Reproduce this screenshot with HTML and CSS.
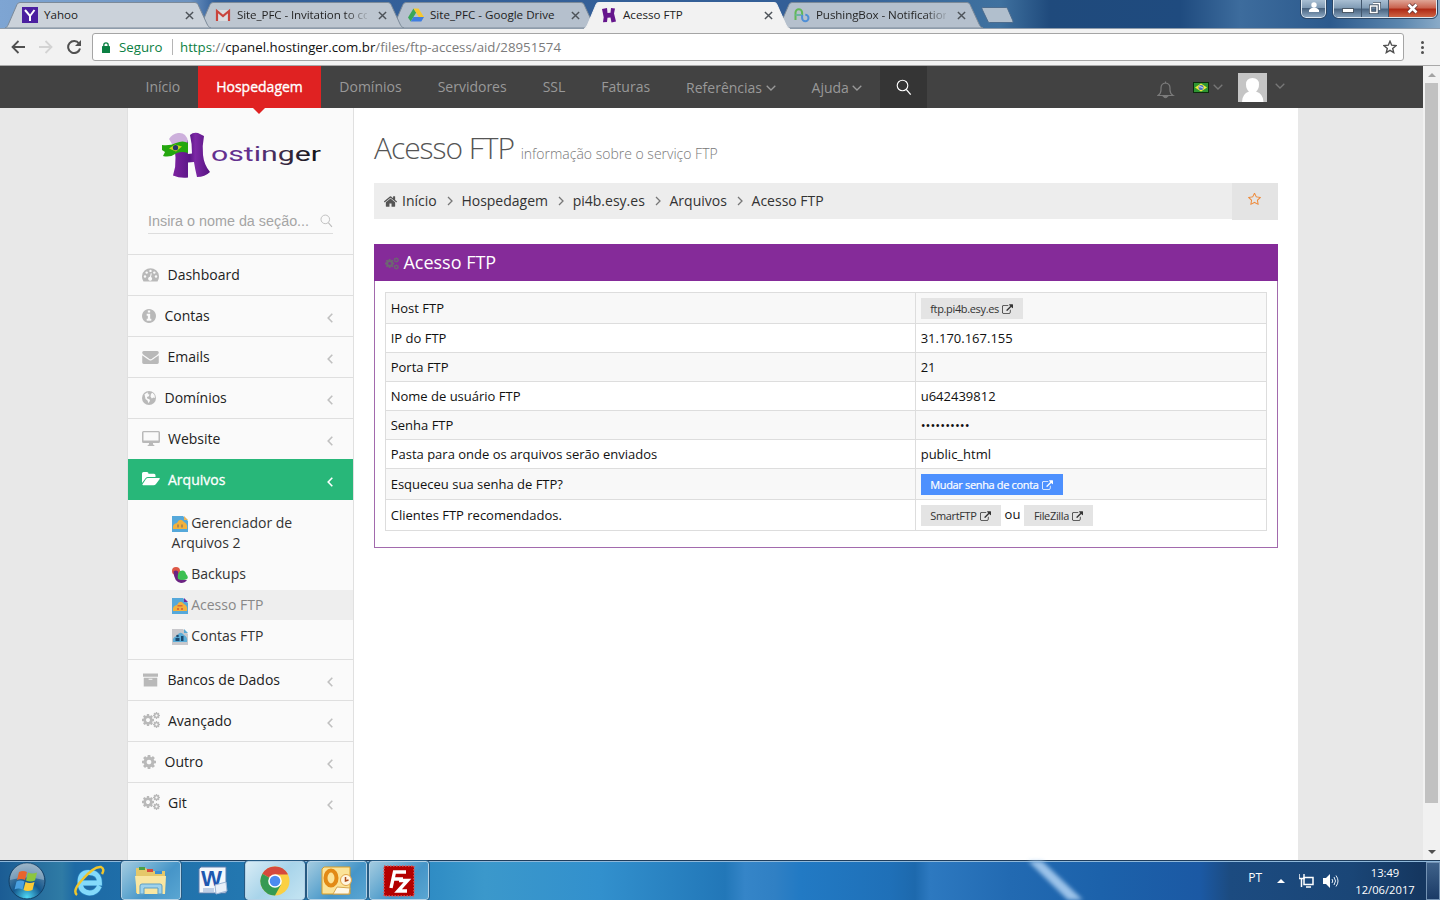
FILE: index.html
```html
<!DOCTYPE html>
<html lang="pt-BR">
<head>
<meta charset="utf-8">
<title>Acesso FTP</title>
<link rel="stylesheet" href="styles.css">
</head>
<body>
<svg class="defs" width="0" height="0" aria-hidden="true">
  <symbol id="tab" viewBox="0 0 206 28" preserveAspectRatio="none"><path d="M0 28 C2 27.500 2.500 26 3.500 24 L12 4.500 Q13 2.500 15 2.500 H190 Q192 2.500 193 4.500 L202 24 C203 26 204 27.500 206 28Z"/></symbol>
  <symbol id="close" viewBox="0 0 10 10"><path d="M1 1l8 8M9 1l-8 8" fill="none" stroke="#4d5359" stroke-width="1.600"/></symbol>
  <symbol id="down" viewBox="0 0 10 6"><path d="M.7.7L5 5 9.300.7" fill="none" stroke="currentColor" stroke-width="1.300"/></symbol>
  <symbol id="left" viewBox="0 0 6 10"><path d="M5.300.8L1.200 5l4.100 4.200" fill="none" stroke="currentColor" stroke-width="1.600"/></symbol>
  <symbol id="right" viewBox="0 0 6 10"><path d="M1 1l4 4-4 4" fill="none" stroke="currentColor" stroke-width="1.300"/></symbol>
  <symbol id="search" viewBox="0 0 16 17"><circle cx="6.500" cy="6.500" r="5.300" fill="none" stroke="currentColor" stroke-width="1.100"/><path d="M10.200 10.400l4.500 5.300" fill="none" stroke="currentColor" stroke-width="1.300"/></symbol>
  <symbol id="cog" viewBox="128 128 1536 1536"><path d="M1152 896q0-106-75-181t-181-75-181 75-75 181 75 181 181 75 181-75 75-181zm512-109v222q0 12-8 23t-20 13l-185 28q-19 54-39 91 35 50 107 138 10 12 10 25t-9 23q-27 37-99 108t-94 71q-12 0-26-9l-138-108q-44 23-91 38-16 136-29 186-7 28-36 28h-222q-14 0-24.500-8.500t-11.500-21.500l-28-184q-49-16-90-37l-141 107q-10 9-25 9-14 0-25-11-126-114-165-168-7-10-7-23 0-12 8-23 15-21 51-66.500t54-70.500q-27-50-41-99l-183-27q-13-2-21-12.500t-8-23.500v-222q0-12 8-23t19-13l186-28q14-46 39-92-40-57-107-138-10-12-10-24 0-10 9-23 26-36 98.500-107.500t94.500-71.500q13 0 26 10l138 107q44-23 91-38 16-136 29-186 7-28 36-28h222q14 0 24.500 8.500t11.500 21.500l28 184q49 16 90 37l142-107q9-9 24-9 13 0 25 10 129 119 165 170 7 8 7 22 0 12-8 23-15 21-51 66.500t-54 70.500q26 50 41 98l183 28q13 2 21 12.500t8 23.500z"/></symbol>
  <symbol id="cogs" viewBox="0 0 18 16"><use href="#cog" x="0" y="2" width="12" height="12"/><use href="#cog" x="11" y="0" width="7" height="7"/><use href="#cog" x="11" y="9" width="7" height="7"/></symbol>
  <symbol id="staro" viewBox="64 128 1664 1600"><path d="M1201 1004l306-297-422-62-189-382-189 382-422 62 306 297-73 421 378-199 377 199zm527-357q0 22-26 48l-363 354 86 500q1 7 1 20 0 50-41 50-19 0-40-12l-449-236-449 236q-22 12-40 12-21 0-31.500-14.500t-10.500-35.500q0-6 2-20l86-500-364-354q-25-27-25-48 0-37 56-46l502-73 225-455q19-41 49-41t49 41l225 455 502 73q56 9 56 46z"/></symbol>
  <symbol id="home" viewBox="90 250 1612 1290"><path d="M1472 992v480q0 26-19 45t-45 19h-384v-384h-256v384h-384q-26 0-45-19t-19-45v-480q0-1 .5-3t.5-3l575-474 575 474q1 2 1 6zm223-69l-62 74q-8 9-21 11h-3q-13 0-21-7l-692-577-692 577q-12 8-24 7-13-2-21-11l-62-74q-8-10-7-23.500t11-21.500l719-599q32-26 76-26t76 26l244 204v-195q0-14 9-23t23-9h192q14 0 23 9t9 23v408l219 182q10 8 11 21.500t-7 23.500z"/></symbol>
  <symbol id="ext" viewBox="0 0 1792 1540"><path d="M1408 928v320q0 119-84.500 203.500t-203.500 84.500h-832q-119 0-203.500-84.500t-84.500-203.500v-832q0-119 84.500-203.500t203.500-84.500h704q14 0 23 9t9 23v64q0 14-9 23t-23 9h-704q-66 0-113 47t-47 113v832q0 66 47 113t113 47h832q66 0 113-47t47-113v-320q0-14 9-23t23-9h64q14 0 23 9t9 23zm384-864v512q0 26-19 45t-45 19-45-19l-176-176-652 652q-10 10-23 10t-23-10l-114-114q-10-10-10-23t10-23l652-652-176-176q-19-19-19-45t19-45 45-19h512q26 0 45 19t19 45z"/></symbol>
  <symbol id="info" viewBox="128 128 1536 1536"><path d="M1152 1376v-160q0-14-9-23t-23-9h-96v-512q0-14-9-23t-23-9h-320q-14 0-23 9t-9 23v160q0 14 9 23t23 9h96v320h-96q-14 0-23 9t-9 23v160q0 14 9 23t23 9h448q14 0 23-9t9-23zm-128-896v-160q0-14-9-23t-23-9h-192q-14 0-23 9t-9 23v160q0 14 9 23t23 9h192q14 0 23-9t9-23zm640 416q0 209-103 385.500t-279.500 279.500-385.500 103-385.500-103-279.500-279.500-103-385.500 103-385.500 279.500-279.500 385.500-103 385.500 103 279.500 279.500 103 385.500z"/></symbol>
  <symbol id="mail" viewBox="0 256 1792 1408"><path d="M1792 710v794q0 66-47 113t-113 47h-1472q-66 0-113-47t-47-113v-794q44 49 101 87 362 246 497 345 57 42 92.500 65.500t94.500 48 110 24.500h2q51 0 110-24.500t94.500-48 92.500-65.500q170-123 498-345 57-39 100-87zm0-294q0 79-49 151t-122 123q-376 261-468 325-10 7-42.500 31t-54 38.500-52 32.500-57.500 27-50 9h-2q-23 0-50-9t-57.500-27-52-32.500-54-38.500-42.500-31q-91-64-262-182.500t-205-142.500q-62-42-117-115.500t-55-136.500q0-78 41.500-130t118.500-52h1472q65 0 112.500 47t47.500 113z"/></symbol>
  <symbol id="gauge" viewBox="0 0 17 14"><path d="M1.500 13.500A8.500 8.500 0 1 1 15.500 13.500Z"/><g fill="#fafafa"><circle cx="3" cy="8.500" r="1.200"/><circle cx="4.700" cy="4.600" r="1.200"/><circle cx="8.500" cy="2.900" r="1.200"/><circle cx="12.300" cy="4.600" r="1.200"/><circle cx="14" cy="8.500" r="1.200"/><path d="M9.800 5.500l-.8 3.500a2 2 0 1 1-1-.2l.8-3.600z"/></g></symbol>
  <symbol id="globe" viewBox="0 0 14 14"><circle cx="7" cy="7" r="7"/><path fill="#fafafa" d="M2.500 3.200L5.300 1.500 6.500 2 5.500 3l2 .5-.6 1.700-2 .7.300 1.500 2.200.8.600 1.500-1.500 2.500-1-2.700L3.500 8zM9 2.800l1.500-1L12.500 4l.5 3-1.500-.5L9.800 7.500 8.500 5.500z"/></symbol>
  <symbol id="desktop" viewBox="0 0 18 15"><path fill-rule="evenodd" d="M1.500 0h15Q18 0 18 1.500v9Q18 12 16.500 12H11v1.500q1.500 0 1.500 1.500h-7q0-1.500 1.500-1.500V12H1.500Q0 12 0 10.500v-9Q0 0 1.500 0zm0 1.300v8.200h15V1.300z"/></symbol>
  <symbol id="folder" viewBox="0 0 18 14"><path d="M0 11V1.500Q0 0 1.500 0H5q1.500 0 1.500 1.700H12q1.500 0 1.500 1.500V5H6Q4.500 5 3.500 6.200zM5.800 6H17q1.400 0 .7 1L14 12q-1 1.300-2.500 1.300H1.200Q-.2 13.300.7 12l3.300-5Q4.800 6 5.800 6z"/></symbol>
  <symbol id="archive" viewBox="0 0 16 14"><path fill-rule="evenodd" d="M0 0h16v3.500H0zM.8 4.500h14.400V14H.8zM6 5.600v1.200h4V5.600z"/></symbol>
</svg>

<header class="tabstrip">
  <div class="tab t1"><svg class="shape"><use href="#tab"/></svg>
    <svg class="fav" viewBox="0 0 16 16"><rect width="16" height="16" fill="#4b1fa0"/><path d="M3 3l5 6 4.500-6M8 9v5" fill="none" stroke="#fff" stroke-width="2"/></svg>
    <span class="title">Yahoo</span><svg class="x"><use href="#close"/></svg></div>
  <div class="tab t2"><svg class="shape"><use href="#tab"/></svg>
    <svg class="fav" viewBox="0 0 16 16"><path d="M1 3h14v11H1z" fill="#d9dbdf"/><path d="M2 14V4l6 5 6-5v10" fill="none" stroke="#c9443c" stroke-width="2.200"/></svg>
    <span class="title fade">Site_PFC - Invitation to co</span><svg class="x"><use href="#close"/></svg></div>
  <div class="tab t3"><svg class="shape"><use href="#tab"/></svg>
    <svg class="fav" viewBox="0 0 16 16"><path d="M5.500 1.500L0 10.500 2.700 14.500 8.200 5.500z" fill="#3aa757"/><path d="M5.500 1.500h5L16 10h-5.200z" fill="#f7c82f"/><path d="M2.700 14.500L5.400 10H16l-2.700 4.500z" fill="#3f7de0"/></svg>
    <span class="title">Site_PFC - Google Drive</span><svg class="x"><use href="#close"/></svg></div>
  <div class="tab t4"><svg class="shape"><use href="#tab"/></svg>
    <svg class="fav" viewBox="0 0 16 16"><path d="M1 2l5-1 .5 5 3-.3L10 1l4 .5-1 5 2 8-4.500 1-1-5-3 .2L6 15l-4 .2.700-5z" fill="#65168c"/></svg>
    <span class="title">Acesso FTP</span><svg class="x"><use href="#close"/></svg></div>
  <div class="tab t5"><svg class="shape"><use href="#tab"/></svg>
    <svg class="fav" viewBox="0 0 16 16" fill="none" stroke-width="2"><path d="M1.500 13V5.500a3.300 3.300 0 0 1 6.600 0V9" stroke="#61b857"/><path d="M1.500 8h6.600" stroke="#6bb5a0"/><path d="M8.100 8V11a3.200 3.200 0 1 0 3.200-3.200" stroke="#4f8fd6"/></svg>
    <span class="title fade">PushingBox - Notification</span><svg class="x"><use href="#close"/></svg></div>
  <svg class="newtab" viewBox="0 0 33 16"><path d="M1.500.5H25q1 0 1.500 1L32 14q.5 1.500-1 1.500H8.500q-1 0-1.500-1L1 2Q.5.5 1.500.5z" fill="#b1bfcd" stroke="#4c6c8e"/></svg>
  <div class="winbtns">
    <div class="wb user"><svg width="12" height="11"><circle cx="6" cy="3" r="2.700" fill="#fff"/><path d="M1 10V8q2-2.500 5-2.200Q9 5.500 11 8v2z" fill="#fff"/></svg></div>
    <div class="wgroup">
      <div class="wb min"><svg width="12" height="5"><rect x=".5" y=".5" width="11" height="4" fill="#fff" stroke="#4c5a68"/></svg></div>
      <div class="wb max"><svg width="12" height="12"><path d="M4 1.500h6.500V8M1.500 4H8v6.500H1.500z" fill="none" stroke="#3c4c5f" stroke-width="3"/><path d="M4 1.500h6.500V8M1.500 4H8v6.500H1.500z" fill="none" stroke="#fff" stroke-width="1.500"/></svg></div>
      <div class="wb cls"><svg width="13" height="11"><path d="M2.500 1.500l8 8M10.500 1.500l-8 8" stroke="#5f3030" stroke-width="4"/><path d="M2.500 1.500l8 8M10.500 1.500l-8 8" stroke="#fff" stroke-width="2.600"/></svg></div>
    </div>
  </div>
</header>

<div class="toolbar">
  <svg class="tb back" viewBox="0 0 14 14"><path d="M14 7H1.500M7.500 1L1.500 7l6 6" fill="none" stroke="#505050" stroke-width="1.800"/></svg>
  <svg class="tb fwd" viewBox="0 0 14 14"><path d="M0 7h12.500M6.500 1l6 6-6 6" fill="none" stroke="#d3d3d3" stroke-width="1.800"/></svg>
  <svg class="tb reload" viewBox="0 0 14 14"><path d="M12 3.500A6 6 0 1 0 13 8.500" fill="none" stroke="#505050" stroke-width="2"/><path d="M14 0v6H8z" fill="#505050"/></svg>
  <div class="omnibox">
    <svg class="lock" viewBox="0 0 8 11"><rect y="4" width="8" height="7" rx=".6" fill="#0b8043"/><path d="M1.800 5V3a2.200 2.200 0 0 1 4.400 0v2" fill="none" stroke="#0b8043" stroke-width="1.300"/></svg>
    <span class="secure">Seguro</span><i class="sep"></i>
    <span class="url"><b>https</b>://<em>cpanel.hostinger.com.br</em>/files/ftp-access/aid/28951574</span>
    <svg class="bm" viewBox="0 0 14 14"><path d="M7 1.200l1.700 4 4.300.4-3.300 2.800 1 4.200L7 10.400l-3.700 2.200 1-4.200L1 5.600l4.300-.4z" fill="none" stroke="#505050" stroke-width="1.400"/></svg>
  </div>
  <svg class="dots" viewBox="0 0 3 13" fill="#505050"><circle cx="1.500" cy="1.500" r="1.500"/><circle cx="1.500" cy="6.500" r="1.500"/><circle cx="1.500" cy="11.500" r="1.500"/></svg>
</div>

<div class="viewport">
  <div class="site">
    <nav class="topnav">
      <a>Início</a><a class="on">Hospedagem</a><a>Domínios</a><a>Servidores</a><a>SSL</a><a>Faturas</a>
      <a class="drop">Referências<svg><use href="#down"/></svg></a><a class="drop">Ajuda<svg><use href="#down"/></svg></a>
      <a class="find"><svg><use href="#search"/></svg></a>
      <div class="tools">
        <svg class="bell" viewBox="0 0 18 18" fill="none" stroke="#7b7b7b" stroke-width="1.200"><path d="M1 14.500q3-2 3-5.500V7q0-4.500 4.500-5Q13 2.500 13 7v2q0 3.500 3 5.500z"/><path d="M6.500 15.500q2 2.500 4 0z" fill="#7b7b7b"/><path d="M8.500 2V.5"/></svg>
        <svg class="flag" viewBox="0 0 16 11"><rect width="16" height="11" fill="#0c2c0c"/><rect x="1" y="1" width="14" height="9" fill="#2f9632"/><path d="M8 1.500l6 4-6 4-6-4z" fill="#f1ec3c"/><circle cx="8" cy="5.500" r="2.500" fill="#466fc0"/><path d="M6 4.800q2-.5 4 1.300" stroke="#fff" stroke-width=".8" fill="none"/></svg>
        <svg class="dn"><use href="#down"/></svg>
        <svg class="avatar" viewBox="0 0 29 29"><rect width="29" height="29" fill="#c5c5c5"/><path d="M4 29q0-8 7-10.500Q8 16 8 11.500 8 5 14.500 5T21 11.500q0 4.500-3 7Q25.500 21 25.500 29z" fill="#fff"/></svg>
        <svg class="dn last"><use href="#down"/></svg>
      </div>
    </nav>
    <div class="page">
      <aside class="side">
        <div class="brand">
          <svg width="162" height="50" viewBox="0 0 162 50">
            <defs><linearGradient id="pu" x1="0" y1="0" x2="1" y2="0"><stop offset="0" stop-color="#7d23a0"/><stop offset=".45" stop-color="#5b1687"/><stop offset=".6" stop-color="#7d28a6"/><stop offset="1" stop-color="#551280"/></linearGradient>
            <linearGradient id="wm" gradientUnits="userSpaceOnUse" x1="50" y1="0" x2="160" y2="0"><stop offset=".35" stop-color="#63308f"/><stop offset=".65" stop-color="#3b2a45"/><stop offset="1" stop-color="#111"/></linearGradient></defs>
            <path d="M13 12l14-3q-1 7 0 14l4-.5Q31 12 29 4q3-3 8-2l6 3q-2 10-1 19 1 10 7 17-5 5-13 5-2-8-3-15l-6 .5q0 8 0 15-8 1-15-2 3-9 2.500-18z" fill="url(#pu)"/>
            <path d="M8 8q3-5 9-6 8-1 10 8l-3 4-13-1z" fill="#cdb0dc"/>
            <path d="M1 14q8 1 14-2 7-3 12 0l0 10q-6-2-11 0-7 5-14 3l2-4-3-2z" fill="#24a70e"/><path d="M8 17.500l6-4 7 2-6 5z" fill="#c6d320"/><circle cx="14.500" cy="16.700" r="2.600" fill="#23386c"/>
            <text class="wordmark" x="50" y="30" textLength="110" lengthAdjust="spacingAndGlyphs" fill="url(#wm)">ostinger</text>
          </svg>
        </div>
        <div class="quick"><span>Insira o nome da seção...</span><svg><use href="#search"/></svg></div>
        <ul class="menu">
          <li><svg class="ic" width="17" height="14"><use href="#gauge"/></svg><span>Dashboard</span></li>
          <li><svg class="ic" width="14" height="14"><use href="#info"/></svg><span>Contas</span><svg class="arr"><use href="#left"/></svg></li>
          <li><svg class="ic" width="17" height="13"><use href="#mail"/></svg><span>Emails</span><svg class="arr"><use href="#left"/></svg></li>
          <li><svg class="ic" width="14" height="14"><use href="#globe"/></svg><span>Domínios</span><svg class="arr"><use href="#left"/></svg></li>
          <li><svg class="ic up1" width="18" height="15"><use href="#desktop"/></svg><span>Website</span><svg class="arr"><use href="#left"/></svg></li>
          <li class="on"><svg class="ic up1" width="18" height="14"><use href="#folder"/></svg><span>Arquivos</span><svg class="arr"><use href="#left"/></svg></li>
        </ul>
        <ul class="sub">
          <li><svg viewBox="0 0 16 16"><path d="M0 0h11l5 5v11H0z" fill="#55a8da"/><path d="M12 0l4 4h-4z" fill="#e9b45d"/><path d="M1 13q-1-5 4-6 3-6 7-1 4 2 3 7z" fill="#f3b13c"/><path d="M5 8.500h2v3H5zm4 0h2v3H9z" fill="#b38b4a"/></svg>Gerenciador de Arquivos 2</li>
          <li><svg viewBox="0 0 16 16"><circle cx="4" cy="4" r="4" fill="#dd5745"/><path d="M1.500 4.500q2.500-2 4.500 0L7 12l8 1q-2 3-6 3-7-1-7.500-11.500z" fill="#6b2382"/><path d="M6 12q-1-5 2-8 5-2 6 3 3 3 1 5-5 2-9 0z" fill="#3cc052"/></svg>Backups</li>
          <li class="on"><svg viewBox="0 0 16 16"><path d="M0 0h11l5 5v11H0z" fill="#55a8da"/><path d="M12 0l4 4h-4z" fill="#6b2aa0"/><path d="M1 13q-1-5 4-6 3-6 7-1 4 2 3 7z" fill="#f3b13c"/><path d="M5.500 7h5v1.500h-5zM5 10h2v2H5zm4 0h2v2H9z" fill="#dc6b3a"/></svg>Acesso FTP</li>
          <li><svg viewBox="0 0 16 16"><path d="M0 0h11l5 5v11H0z" fill="#c8c8cc"/><path d="M12 0l4 4h-4z" fill="#58a9d5"/><path d="M1 13q-1-5 4-6 3-6 7-1 4 2 3 7z" fill="#5badd8"/><circle cx="5.500" cy="7" r="1.300" fill="#1c4a70"/><path d="M3.500 9h4v3h-4zM9 7h2.500v5H9z" fill="#1c4a70"/></svg>Contas FTP</li>
        </ul>
        <ul class="menu">
          <li><svg class="ic box" width="15" height="14"><use href="#archive"/></svg><span>Bancos de Dados</span><svg class="arr"><use href="#left"/></svg></li>
          <li><svg class="ic up1" width="18" height="16"><use href="#cogs"/></svg><span>Avançado</span><svg class="arr"><use href="#left"/></svg></li>
          <li><svg class="ic" width="14" height="14"><use href="#cog"/></svg><span>Outro</span><svg class="arr"><use href="#left"/></svg></li>
          <li><svg class="ic up1" width="18" height="16"><use href="#cogs"/></svg><span>Git</span><svg class="arr"><use href="#left"/></svg></li>
        </ul>
      </aside>
      <main class="main">
        <h1>Acesso FTP <small>informação sobre o serviço FTP</small></h1>
        <div class="crumbs">
          <svg class="hm"><use href="#home"/></svg><span>Início</span><svg class="sp"><use href="#right"/></svg><span>Hospedagem</span><svg class="sp"><use href="#right"/></svg><span>pi4b.esy.es</span><svg class="sp"><use href="#right"/></svg><span>Arquivos</span><svg class="sp"><use href="#right"/></svg><span>Acesso FTP</span>
          <div class="fav-box"><svg><use href="#staro"/></svg></div>
        </div>
        <section class="panel">
          <h2><svg><use href="#cogs"/></svg><span>Acesso FTP</span></h2>
          <table>
            <tr class="tall"><td>Host FTP</td><td><a class="btn">ftp.pi4b.esy.es<svg><use href="#ext"/></svg></a></td></tr>
            <tr><td>IP do FTP</td><td>31.170.167.155</td></tr>
            <tr><td>Porta FTP</td><td>21</td></tr>
            <tr><td>Nome de usuário FTP</td><td>u642439812</td></tr>
            <tr><td>Senha FTP</td><td>••••••••••</td></tr>
            <tr><td>Pasta para onde os arquivos serão enviados</td><td>public_html</td></tr>
            <tr class="tall"><td>Esqueceu sua senha de FTP?</td><td><a class="btn blue">Mudar senha de conta<svg><use href="#ext"/></svg></a></td></tr>
            <tr class="tall"><td>Clientes FTP recomendados.</td><td><a class="btn">SmartFTP<svg><use href="#ext"/></svg></a><span class="ou">ou</span><a class="btn">FileZilla<svg><use href="#ext"/></svg></a></td></tr>
          </table>
        </section>
      </main>
    </div>
  </div>
  <div class="scroll"><i class="up"></i><div class="thumb"></div><i class="dw"></i></div>
</div>

<footer class="taskbar">
  <svg class="streak" width="60" height="39"><path d="M3 0h14l42 40H44z" fill="#a9cdf0"/></svg>
  <svg class="orb" viewBox="0 0 38 38">
    <defs><radialGradient id="orb" cx=".5" cy=".95" r=".9"><stop offset="0" stop-color="#4fd8f5"/><stop offset=".45" stop-color="#14578d"/><stop offset="1" stop-color="#6d92ae"/></radialGradient></defs>
    <circle cx="19" cy="19" r="18" fill="url(#orb)" stroke="#123f66"/><path d="M2 18A17 17 0 0 1 36 18Q19 13 2 18z" fill="#fff" opacity=".3"/>
    <path d="M11 10q4-2 8 0l-2 8q-4-2-8 0z" fill="#e8652c"/><path d="M20 10.500q4 2 9 0l-2 8q-5 2-9 0z" fill="#8cc63e"/><path d="M8.500 19.500q4-2 8 0l-2 8q-4-2-8 0z" fill="#4aa0e0"/><path d="M17.500 20q4 2 9 0l-2 8q-5 2-9 0z" fill="#fccb35"/></svg>
  <div class="task ie"><svg width="32" height="32" viewBox="0 0 32 32"><path d="M26.500 21q-3 7-10 7-9.500-1-9.500-11T16 7.500q10.500 0 10.500 10.500H9" fill="none" stroke="#2b86c2" stroke-width="6"/><path d="M26.500 21q-3 7-10 7-9.500-1-9.500-11T16 7.500q10.500 0 10.500 10.500H9" fill="none" stroke="#84dafa" stroke-width="4.800"/><path d="M4 30q-5-4 5-15Q21 1 28 2q4 2 1 7" fill="none" stroke="#f0c62c" stroke-width="2.500"/></svg></div>
  <div class="task framed"><svg width="32" height="30" viewBox="0 0 32 30"><path d="M1 2h10l2 3h17v22H1z" fill="#e5c869"/><path d="M4 1h6v3H4z" fill="#4ba045"/><path d="M12 3h6v3h-6z" fill="#d8483b"/><path d="M20 5h7v3h-7z" fill="#3a8fd4"/><path d="M0 10h31l-1 18H2z" fill="#f8e6a2"/><path d="M5 28V20q0-2 2-2h18q2 0 2 2v8h-4v-6H9v6z" fill="#9ed2ec" stroke="#5d9fc5"/></svg></div>
  <div class="task word"><svg width="32" height="30" viewBox="0 0 32 30"><path d="M4 1h25v26H2V3z" fill="#f3f7fc" stroke="#5d7fae"/><text class="w" x="4" y="20" textLength="21" lengthAdjust="spacingAndGlyphs">W</text><path d="M18 19l11-3 1 9-11 3z" fill="#e9f0f9" stroke="#9fb7d6"/><path d="M6 23h11M6 25h11" stroke="#8aa7cf"/></svg></div>
  <div class="task framed active"><svg width="30" height="30" viewBox="0 0 30 30"><circle cx="15" cy="15" r="14.500" fill="#fbd043"/><path d="M15 15L2.400 7.700A14.500 14.500 0 0 1 27.600 7.700L27.600 8.500H15z" fill="#d5493c"/><path d="M2.400 7.700A14.500 14.500 0 0 0 15 29.500L21 18.500 15 15z" fill="#359a53"/><circle cx="15" cy="15" r="6.800" fill="#fff"/><circle cx="15" cy="15" r="5.300" fill="#4c8bf0"/></svg></div>
  <div class="task framed"><svg width="32" height="30" viewBox="0 0 32 30"><path d="M3 1h26v27H1V3z" fill="#fbe398" stroke="#d89d26"/><ellipse cx="10" cy="12" rx="5.500" ry="7.500" fill="none" stroke="#e28a16" stroke-width="4"/><circle cx="25" cy="14" r="5.500" fill="#fff5df" stroke="#e1a447"/><path d="M24.500 11v4l3-1" fill="none" stroke="#ad4c1c" stroke-width="1.500"/><path d="M16 21l13 1-1 6H12z" fill="#fff8e6" stroke="#d8a850"/></svg></div>
  <div class="task framed"><svg width="32" height="32" viewBox="0 0 32 32"><rect x="1" y="1" width="30" height="30" fill="#b40000" stroke="#d85c5c" stroke-width="1.500" stroke-dasharray="1.500 1.500"/><path d="M8 23L11.500 7H23M10 14H20M16 15.500h8.500L15 26h9" fill="none" stroke="#fff" stroke-width="3.400"/></svg></div>
  <div class="tray">
    <span class="lang">PT</span><i class="tri"></i>
    <svg class="net" width="15" height="14"><path d="M5 3.500h9v7H5zM7 13h5M2.500 5v8" fill="none" stroke="#fff" stroke-width="1.500"/><path d="M0 0v4.500h5V0" fill="none" stroke="#fff" stroke-width="1.400"/></svg>
    <svg class="vol" width="16" height="14"><path d="M0 4h3l4-4v14l-4-4H0z" fill="#fff"/><path d="M9 5q1.500 2 0 4M11 3q3 4 0 8M13 1.500q4 5.500 0 11" fill="none" stroke="#e8f0f8"/></svg>
    <div class="clock"><span>13:49</span><span>12/06/2017</span></div>
    <div class="peek"></div>
  </div>
</footer>
</body>
</html>
```

FILE: styles.css
```css
* { box-sizing: border-box; }
body { margin: 0; width: 1440px; height: 900px; overflow: hidden; display: flex; flex-direction: column; font: 14px/20px "Open Sans", sans-serif; color: #222; background: #e8e8e8; }
svg { display: block; flex: none; }
svg.defs { position: absolute; }
ul { list-style: none; margin: 0; padding: 0; }

/* browser tabs */
.tabstrip { height: 29px; flex: none; display: flex; padding-left: 5px; position: relative; border-bottom: 1px solid #8e9cab; background: linear-gradient(90deg, #7ea5d3 0, #6d93c0 190px, #33609a 215px, #345f97 800px, #3f719f 1000px, #1f4a7c 1050px, #1f4b7f 1180px, #3d6c9d 1240px, #2c5a8d 1330px, #5b86ae 1400px, #8aabc8 1440px); }
.tab { width: 206px; height: 28px; flex: none; position: relative; display: flex; align-items: center; padding: 2px 17px 0 17px; margin-right: -13px; font-size: 11.600px; color: #222; }
.shape { position: absolute; left: 0; top: 0; width: 206px; height: 28px; fill: #b5c0cd; stroke: #7c8a99; stroke-width: 1; overflow: visible; }
.t1 { z-index: 5; } .t2 { z-index: 4; } .t3 { z-index: 3; } .t4 { z-index: 6; } .t5 { z-index: 2; }
.t1 .shape { fill: #cbd2da; }
.t2 .shape { fill: #bdc6d0; }
.t4 .shape { fill: #f2f2f2; stroke: #f2f2f2; height: 29px; }
.fav { width: 16px; height: 16px; position: relative; }
.title { width: 130px; margin-left: 6px; position: relative; white-space: nowrap; }
.fade { background: linear-gradient(90deg, #222 108px, #22222200 134px); -webkit-background-clip: text; background-clip: text; color: transparent; letter-spacing: -.1px; }
.x { width: 9px; height: 9px; position: relative; margin-left: auto; }
.newtab { width: 33px; height: 16px; margin: 7px 0 0 11px; }
.winbtns { margin-left: auto; display: flex; gap: 7px; padding-right: 3px; }
.wb { height: 18px; display: flex; align-items: center; justify-content: center; padding-bottom: 2px; background: linear-gradient(#a9bfd3, #7f9ab4 45%, #48627e 50%, #8ba7c2); }
.user { width: 25px; border: 1px solid #dfe8f0; border-top: 0; border-radius: 0 0 5px 5px; outline: 1px solid #2c4766; }
.wgroup { display: flex; height: 18px; border: 1px solid #dfe8f0; border-top: 0; border-radius: 0 0 5px 5px; outline: 1px solid #2c4766; overflow: hidden; }
.min { width: 28px; padding-top: 4px; border-right: 1px solid #41566d; }
.max { width: 27px; border-right: 1px solid #41566d; }
.cls { width: 47px; background: linear-gradient(#dfa596, #c8604c 45%, #ae2814 50%, #d26a48); }

/* address bar */
.toolbar { height: 37px; flex: none; display: flex; align-items: center; background: #f2f2f2; border-bottom: 1px solid #a9a9a9; padding: 0 16px 0 11px; }
.tb { width: 14px; height: 14px; }
.fwd { margin-left: 14px; }
.reload { margin-left: 14px; margin-right: 11px; }
.omnibox { width: 1312px; height: 28px; background: #fff; border: 1px solid #a5a5a5; border-radius: 3px; display: flex; align-items: center; padding: 0 6px 0 9px; font-size: 13.280px; color: #7b7b7b; }
.lock { width: 8px; height: 11px; }
.secure { color: #0b8043; margin-left: 9px; width: 44px; }
.sep { width: 1px; height: 16px; background: #b5b5b5; margin: 0 7px 0 9px; }
.url { white-space: nowrap; }
.url b { font-weight: 400; color: #0b8043; }
.url em { font-style: normal; color: #111; }
.bm { width: 14px; height: 14px; margin-left: auto; }
.dots { width: 3px; height: 13px; margin-left: auto; }

/* site */
.viewport { height: 794px; flex: none; display: flex; }
.site { width: 1423px; display: flex; flex-direction: column; }
.topnav { height: 42px; flex: none; display: flex; background: #424242; padding-left: 127px; color: #999; }
.topnav a { height: 42px; padding: 0 18px; line-height: 42px; display: flex; align-items: center; }
.topnav a:first-child { padding-left: 18.500px; }
.topnav .on { padding-right: 18.500px; background: #e02222; color: #fff; position: relative; -webkit-text-stroke: .35px #fff; }
.topnav .on::after { content: ""; position: absolute; left: 55px; top: 42px; border: 6px solid transparent; border-top-color: #e02222; border-bottom: 0; }
.topnav .drop { padding-top: 2px; }
.drop svg { width: 10px; height: 6px; margin-left: 3.500px; }
.topnav .find { width: 47px; background: #353535; color: #fff; padding: 0 0 0 16px; }
.find svg { width: 16px; height: 17px; }
.tools { margin-left: auto; display: flex; align-items: center; padding-right: 138px; color: #777; }
.bell { width: 18px; height: 18px; margin-top: 6px; }
.flag { width: 16px; height: 11px; margin: 1px 0 0 18px; }
.dn { width: 10px; height: 6px; margin-left: 4px; }
.avatar { width: 29px; height: 29px; margin-left: 15px; }
.last { margin-left: 8px; margin-top: -3px; }
.page { flex: 1; width: 1171px; margin-left: 127px; display: flex; background: #fff; }
.side { width: 227px; flex: none; background: #fafafa; border: solid #e0e0e0; border-width: 0 1px; }
.brand { height: 98px; padding: 23px 0 0 33px; }
.wordmark { font: 400 21px Roboto, sans-serif; }
.quick { margin: 0 20px 20px; padding-top: 3px; height: 28px; border-bottom: 1px solid #ddd; display: flex; align-items: center; justify-content: space-between; font: 14.350px "Liberation Sans", sans-serif; color: #a5a5a5; white-space: nowrap; }
.quick svg { width: 13px; height: 14px; color: #bbb; }
.menu li { height: 41px; border-top: 1px solid #dfdfdf; display: flex; align-items: center; padding: 0 20px 0 14px; color: #222; }
.ic { fill: #b9b9b9; margin-right: 8.500px; }
.box { margin-left: 1px; margin-right: 9.500px; }
.ic.up1 { margin-top: -2px; margin-right: 8px; }
.arr { width: 6px; height: 10px; color: #c0c0c0; margin: 4px 0 0 auto; }
.menu .on { background: #28b779; border-color: #28b779; color: #fff; -webkit-text-stroke: .3px #fff; }
.on .ic { fill: #fff; }
.on .arr { color: #fff; }
.sub { padding: 8px 0; }
.sub li { padding: 5px 40px 5px 43.600px; margin-bottom: 1px; color: #333; }
.sub li:last-child { margin: 0; }
.sub svg { width: 16px; height: 16px; display: inline-block; vertical-align: -4px; margin-right: 3.600px; }
.sub .on { background: #eee; color: #888; }

.main { flex: 1; padding: 21px 20px 0; }
h1 { margin: 0; height: 54px; font-size: 30px; line-height: 38px; font-weight: 300; letter-spacing: -1.050px; color: #555; white-space: nowrap; }
h1 small { font-size: 14px; letter-spacing: 0; color: #777; }
.crumbs { height: 36px; background: #ededed; display: flex; align-items: center; padding-left: 10px; color: #333; }
.hm { width: 13px; height: 11px; fill: #555; margin-right: 5px; }
.sp { width: 6px; height: 10px; color: #777; margin: 0 8.700px 0 10px; }
.fav-box { width: 46px; height: 37px; align-self: flex-start; margin-left: auto; background: #e4e4e4; display: flex; justify-content: center; padding: 10px 2px 0 0; }
.fav-box svg { width: 13px; height: 13px; fill: #ee8a3a; }
.panel { margin-top: 25px; height: 304px; border: 1px solid #a26aad; border-top: 0; padding: 0 10px; }
h2 { height: 37px; margin: 0 -11px 11px; padding-left: 11px; background: #852b99; color: #fff; font-size: 18px; font-weight: 400; display: flex; align-items: center; }
h2 span { margin-bottom: 2px; }
h2 svg { width: 14px; height: 13px; fill: #6d6572; margin: 2px 4.400px 0 0; }
table { width: 882px; border-collapse: collapse; table-layout: fixed; font-size: 13px; color: #111; }
td { height: 29px; padding: 0 5px 0 4.700px; border: 1px solid #ddd; line-height: 20px; }
td:first-child { width: 530px; }
.tall td { height: 31px; }
tr:nth-child(odd) td { background: #f8f8f8; }
.btn { display: inline-flex; align-items: center; height: 21px; padding: 0 10px 0 9.500px; background: #e4e4e4; color: #333; font-size: 11px; letter-spacing: -.340px; vertical-align: middle; }
.btn svg { width: 11px; height: 10px; margin-left: 3px; fill: #333; }
.blue { background: #4d90fe; color: #fff; -webkit-text-stroke: .2px #fff; }
.blue svg { fill: #fff; }
.ou { margin: 0 4px; }

.scroll { width: 17px; background: #f1f1f1; display: flex; flex-direction: column; align-items: center; }
.scroll i { height: 17px; display: flex; align-items: center; }
.up::after, .dw::after { content: ""; border: 4px solid transparent; border-bottom-color: #a3a3a3; border-top: 0; }
.dw::after { border-top: 4px solid #505050; border-bottom: 0; }
.thumb { width: 13px; height: 720px; background: #c1c1c1; }
.dw { margin-top: auto; }

/* taskbar */
.taskbar { height: 40px; flex: none; position: relative; display: flex; align-items: center; border-top: 1px solid #1f3d5c; box-shadow: inset 0 1px 0 #8fb8da; background: linear-gradient(90deg, #1b5c94 0, #2f7ba5 62px, #1d6aa5 75px, #2377b0 240px, #2f8cc4 430px, #3b98cb 485px, #3290cd 600px, #2277b8 725px, #3585c8 745px, #3080c4 775px, #227ac4 800px, #1f70b8 890px, #1d69ad 915px, #2d79c0 930px, #226ab2 1010px, #1c62ab 1100px, #1b59a4 1200px, #1c4b80 1230px, #1a4677 1350px, #153760 1420px); }
.streak { position: absolute; left: 1025px; top: 0; filter: blur(2px); opacity: .9; }
.orb { width: 38px; height: 38px; margin: 0 12px 0 8px; }
.task { width: 60px; height: 39px; flex: none; margin-right: 2px; display: flex; align-items: center; justify-content: center; position: relative; }
.ie { margin-right: 3px; padding-left: 2px; }
.w { font: 700 22px "Liberation Sans", sans-serif; fill: #1d58b0; }
.framed { border: 1px solid #b4d2e6; outline: 1px solid #265a82; outline-offset: 0; border-radius: 3px; background: linear-gradient(135deg, #a3cbe0, #64a8d0 40%, #4695c8 60%, #5aa6d2); }
.active { background: linear-gradient(135deg, #d8ecf5, #a8d4ea 50%, #c4e4f2); }
.tray { margin-left: auto; align-self: stretch; display: flex; align-items: center; color: #fff; font-size: 11.2px; position: relative; }
.lang { margin: -6px 15px 0 0; font-size: 12px; }
.tri { border: 4px solid transparent; border-bottom-color: #fff; border-top: 0; margin-right: 14px; }
.net { margin-right: 9px; }
.vol { margin-right: 16px; }
.clock { width: 60px; text-align: center; line-height: 17px; display: flex; flex-direction: column; white-space: nowrap; margin-right: 11px; }
.peek { width: 14px; height: 38px; border: 1px solid #7493b4; background: linear-gradient(#3f628a, #1b3b66); }
```
